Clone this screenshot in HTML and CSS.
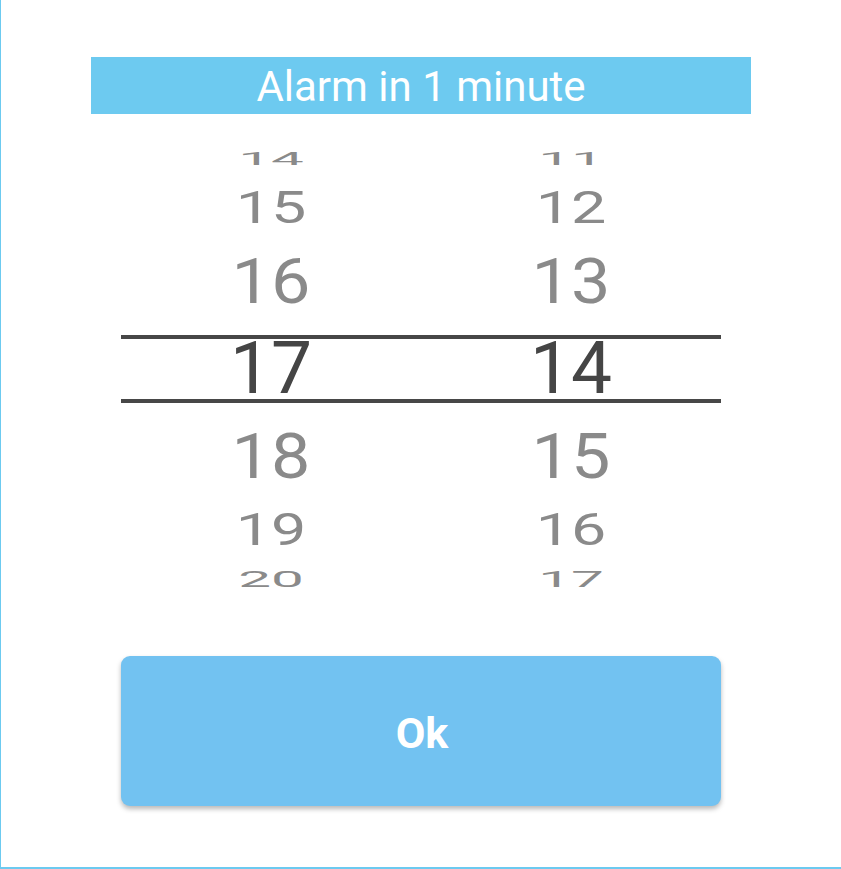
FILE: index.html
```html
<!DOCTYPE html>
<html>
<head>
<meta charset="utf-8">
<link rel="stylesheet" href="styles.css">
</head>
<body>
<div class="screen">
  <div class="title">Alarm in 1 minute</div>
  <div class="picker">
    <div class="row r1"><span>14</span><span>11</span></div>
    <div class="row r2"><span>15</span><span>12</span></div>
    <div class="row r3"><span>16</span><span>13</span></div>
    <div class="row sel"><span>17</span><span>14</span></div>
    <div class="row r5"><span>18</span><span>15</span></div>
    <div class="row r6"><span>19</span><span>16</span></div>
    <div class="row r7"><span>20</span><span>17</span></div>
  </div>
  <button class="ok">Ok</button>
</div>
</body>
</html>
```
FILE: styles.css
```css
html, body {
  margin: 0;
  padding: 0;
  background: #fff;
}
.screen {
  box-sizing: border-box;
  width: 841px;
  height: 869px;
  border-left: 1px solid #6ccaf0;
  border-bottom: 2px solid #6ccaf0;
  display: flex;
  flex-direction: column;
  align-items: center;
  font-family: Roboto, "Noto Sans", sans-serif;
}
.title {
  box-sizing: border-box;
  margin-top: 57px;
  width: 660px;
  height: 57px;
  padding-top: 2px;
  line-height: 55px;
  background: #6dcaf0;
  color: #fff;
  font-size: 42px;
  text-align: center;
}
.picker {
  margin-top: 21px;
  width: 600px;
  display: flex;
  flex-direction: column;
}
.row {
  display: flex;
  align-items: center;
  box-sizing: border-box;
}
.row span {
  flex: 0 0 300px;
  display: block;
  height: 0;
  line-height: 0;
  text-align: center;
  font-size: 73px;
  color: #8a8a8a;
}
.r1 { height: 48px; }
.r1 span { transform: scale(0.8, 0.24); }
.r2 { height: 49px; }
.r2 span { transform: scale(0.86, 0.6); }
.r3 { height: 103px; padding-bottom: 6px; }
.r3 span { transform: scale(0.96, 0.87); }
.sel {
  height: 68px;
  border-top: 4px solid #474747;
  border-bottom: 4px solid #474747;
  padding-bottom: 2px;
}
.sel span { color: #454545; }
.r5 { height: 101px; padding-top: 5px; }
.r5 span { transform: scale(0.96, 0.87); }
.r6 { height: 51px; }
.r6 span { transform: scale(0.86, 0.6); }
.r7 { height: 49px; }
.r7 span { transform: scale(0.8, 0.29); }
.ok {
  margin-top: 52px;
  width: 600px;
  height: 150px;
  border: none;
  border-radius: 9px;
  background: #72c2f1;
  color: #fff;
  font-family: Roboto, "Noto Sans", sans-serif;
  font-weight: 700;
  font-size: 43px;
  line-height: 1;
  box-shadow: 0 3px 5px rgba(0, 0, 0, 0.28);
  padding: 5px 0 0 2px;
}
```
